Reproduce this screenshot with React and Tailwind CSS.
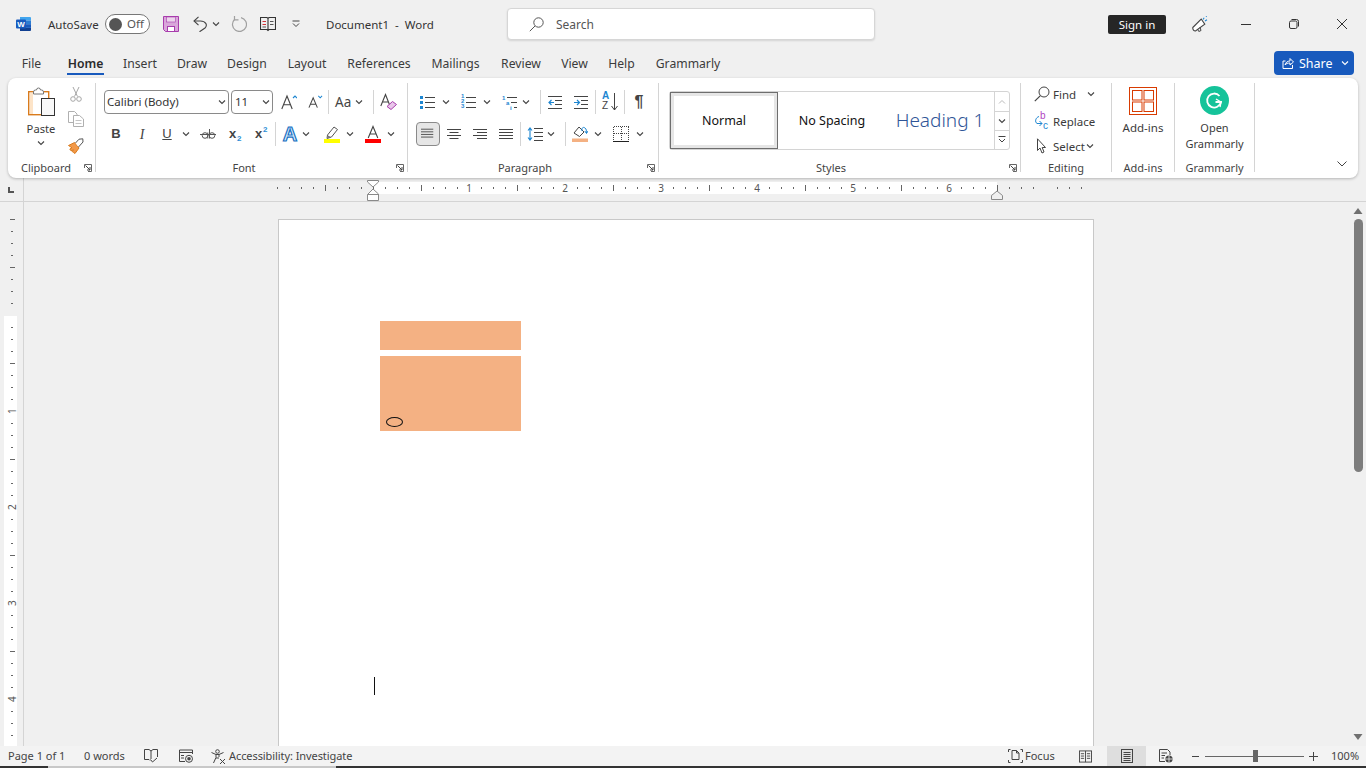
import React from 'react';

// ---- small helpers ----
const Ic = ({ className = 'w-[16px] h-[16px]', box = '0 0 16 16', children }) => (
  <svg viewBox={box} className={`block shrink-0 ${className}`} fill="none">{children}</svg>
);

const Chev = ({ className = '', color = '#444' }) => (
  <Ic className={`w-[8px] h-[8px] ${className}`} box="0 0 8 8">
    <path d="M1 2.5 L4 5.5 L7 2.5" stroke={color} strokeWidth="1.1" />
  </Ic>
);

const Sep = ({ className = '' }) => <div className={`w-px h-[24px] shrink-0 bg-[#d4d4d4] ${className}`} />;
const GroupSep = () => <div className="w-px shrink-0 bg-[#d4d4d4] mt-[5px] mb-[6px]" />;

const Launcher = () => (
  <Ic className="w-[8px] h-[8px] absolute right-[3px] top-[3px]" box="0 0 8 8">
    <path d="M0.5 4 V0.5 H7.5 V7.5 H4" stroke="#666" strokeWidth="1" />
    <path d="M1.5 1.5 L6 6 M3 6 H6 V3" stroke="#444" strokeWidth="1" />
  </Ic>
);

const GroupLabel = ({ children, launcher, className = '' }) => (
  <div className={`relative h-[14px] leading-[14px] text-center text-[11px] text-[#444] whitespace-nowrap ${className}`}>
    {children}
    {launcher && <Launcher />}
  </div>
);

const Lines = ({ rows, className = 'w-[15px] h-[16px]', x1 = 3, x2 = 15 }) => (
  <Ic className={className}>
    {rows.map((y, i) => <path key={i} d={`M${x1} ${y}.5 H${x2}`} stroke="#444" />)}
  </Ic>
);

// ---- title bar icons ----
const WordLogo = () => (
  <Ic className="w-[16px] h-[16px]">
    <path d="M4 1 H14 a1 1 0 0 1 1 1 V4.5 H4 Z" fill="#41a5ee" />
    <rect x="4" y="4.5" width="11" height="3.7" fill="#2b7cd3" />
    <rect x="4" y="8.2" width="11" height="3.7" fill="#185abd" />
    <path d="M4 11.9 H15 V14 a1 1 0 0 1 -1 1 H4 Z" fill="#103f91" />
    <rect x="0" y="3.5" width="10" height="9" rx="1" fill="#185abd" />
    <text x="5" y="11" fontSize="8" fontWeight="700" textAnchor="middle" fill="#fff" fontFamily="Liberation Sans">W</text>
  </Ic>
);

const SaveIcon = () => (
  <Ic>
    <path d="M0.5 0.5 H15.5 V15.5 H2.5 L0.5 13.5 Z" fill="#d9a6da" stroke="#a83cad" />
    <rect x="3.5" y="1" width="9" height="5" fill="#ecd4ec" stroke="#a83cad" strokeWidth="0.6" />
    <rect x="4.5" y="10.5" width="7" height="5" fill="#fff" stroke="#a83cad" />
  </Ic>
);

const UndoIcon = () => (
  <Ic className="w-[14px] h-[16px]" box="0 0 14 16">
    <path d="M1 5 H7.5 C12.5 5 15 9 12 12 L6.5 15.8" stroke="#444" strokeWidth="1.1" />
    <path d="M5.5 0.8 L1 5 L5.5 9.2" stroke="#444" strokeWidth="1.1" />
  </Ic>
);

const RedoIcon = () => (
  <Ic>
    <path d="M3.5 3.5 A7 7 0 1 0 10 1.6" stroke="#a0a0a0" strokeWidth="1.2" />
    <path d="M3.5 0 V3.8 H7.5" stroke="#a0a0a0" strokeWidth="1.2" />
  </Ic>
);

const ReadIcon = () => (
  <Ic>
    <path d="M0.5 1.5 H7 L8 2.5 L9 1.5 H15.5 V13.5 H9 L8 14.5 L7 13.5 H0.5 Z M8 2.5 V14" stroke="#333" strokeWidth="1.1" />
    <path d="M2.5 5.5 H6 M2.5 8.5 H6" stroke="#d13438" />
    <path d="M10 5.5 H13.5 M10 8.5 H13.5 M2.5 11 H6" stroke="#555" />
  </Ic>
);

const SearchIcon = () => (
  <Ic className="w-[15px] h-[15px]" box="0 0 15 15">
    <circle cx="9.5" cy="5.5" r="4.7" stroke="#555" />
    <path d="M6 9 L0.8 14.2" stroke="#555" />
  </Ic>
);

const CoauthIcon = () => (
  <Ic>
    <path d="M0.8 11.5 L9.2 3 L12.8 8.2 L3.5 15 C2 15.2 0.5 13.5 0.8 11.5 Z" stroke="#444" strokeWidth="1.1" fill="#fff" />
    <path d="M5.5 13 L6.8 15.5 L9 14.5 L8 11.2" stroke="#444" />
    <path d="M11 3.5 L12.2 1.8 M13 5 L15 3.8 M14 0.8 L14.6 0.2" stroke="#1d86d1" strokeWidth="1.1" />
  </Ic>
);

const ShareIcon = () => (
  <Ic className="w-[12px] h-[12px]" box="0 0 12 12">
    <path d="M3.5 4 H1 V11.5 H10.5 V8" stroke="#fff" />
    <path d="M3 8 C3.5 5.5 5.5 4 8 4 V1.5 L11.5 5 L8 8 V6 C6 6 4 6.5 3 8 Z" stroke="#fff" />
  </Ic>
);

// ---- clipboard ----
const PasteIcon = () => (
  <Ic className="w-[27px] h-[29px]" box="0 0 27 29">
    <rect x="0.7" y="4.7" width="20" height="23" fill="#fff" stroke="#d97b1c" strokeWidth="1.4" />
    <rect x="2" y="6" width="3" height="21" fill="#fde4c8" />
    <path d="M5.5 5 a2 2 0 0 1 2 -2 h1 a2 2 0 0 1 4 0 h1 a2 2 0 0 1 2 2 v2 h-10 Z" fill="#fff" stroke="#777" />
    <rect x="13.5" y="11.5" width="13" height="17" fill="#f8f8f8" stroke="#333" />
  </Ic>
);

const CutIcon = () => (
  <Ic>
    <path d="M5 1 L9.5 10.5 M11 1 L6.5 10.5" stroke="#a6a6a6" />
    <circle cx="5" cy="13" r="2.3" stroke="#a6a6a6" />
    <circle cx="11" cy="13" r="2.3" stroke="#a6a6a6" />
  </Ic>
);

const CopyIcon = () => (
  <Ic>
    <path d="M5 11.5 H0.5 V0.5 H6.5 L9 3 V4" stroke="#b0b0b0" />
    <path d="M5.5 4.5 H11.5 L15.5 8 V15.5 H5.5 Z" stroke="#b0b0b0" fill="#fff" />
    <path d="M7.5 9.5 H13.5 M7.5 12.5 H13.5" stroke="#c4c4c4" />
  </Ic>
);

const PainterIcon = () => (
  <Ic>
    <path d="M0.5 7.5 L6.5 4.5 L11 10 L7 15.5 C6 14.5 5 14.5 4.2 13.5 L5.5 11.8 L3 12.8 L1.8 11 L4 9.8 Z" fill="#f2994a" stroke="#d97b1c" />
    <path d="M7.5 5 L11 1.2 L14.8 0.8 L15 4 L10.5 9" fill="#fff" stroke="#555" />
  </Ic>
);

// ---- font ----
const GrowIcon = ({ down }) => (
  <Ic className={down ? 'w-[15px] h-[16px]' : 'w-[16px] h-[16px]'}>
    <path d={down ? 'M1 14 L5.5 3.5 L10 14 M2.6 10.5 H8.4' : 'M0.8 15 L6 2 L11.2 15 M2.6 10.8 H9.4'} stroke="#444" strokeWidth="1.1" />
    <path d={down ? 'M11 1.5 L13 3.5 L15 1.5' : 'M12 4 L14 2 L16 4'} stroke="#1d86d1" strokeWidth="1.1" />
  </Ic>
);

const ClearIcon = () => (
  <Ic className="w-[18px] h-[18px]" box="0 0 18 18">
    <path d="M0.8 13 L5.5 1.5 L10 13 M2.5 9 H8.5" stroke="#444" strokeWidth="1.1" />
    <path d="M7 13.5 L12.5 8.5 L16.5 11.5 L11 16.5 Z" fill="#e9c7ea" stroke="#a83cad" />
  </Ic>
);

const Strike = () => (
  <Ic>
    <circle cx="5" cy="9.5" r="2.8" stroke="#555" />
    <path d="M7.8 6.5 V12.5 M9.5 3 V12.5" stroke="#555" />
    <circle cx="12" cy="9.5" r="2.8" stroke="#555" />
    <path d="M0 8.5 H16" stroke="#555" />
  </Ic>
);

const SubSup = ({ sup }) => (
  <span className="relative block w-[16px] h-[16px] font-['Liberation_Sans',sans-serif]">
    <span className="text-[13px] font-bold text-[#444] leading-[16px] absolute left-[1px] top-0">x</span>
    <span className={`text-[8px] font-bold text-[#2e8fd6] leading-[8px] absolute left-[9px] ${sup ? 'top-0' : 'top-[9px]'}`}>2</span>
  </span>
);

const TextEffect = () => (
  <span className="block font-['Liberation_Sans',sans-serif] font-bold text-[20px] leading-[20px] text-[#dff0fb] [-webkit-text-stroke:1.2px_#1a72c4]">A</span>
);

const Highlighter = () => (
  <Ic className="w-[16px] h-[18px]" box="0 0 16 18">
    <path d="M3.5 10 L10 2 L13.5 4.5 L7.5 12 L3 13.5 Z" stroke="#555" fill="#fff" />
    <path d="M4 10.5 L7 12 L3 13.5 Z" fill="#777" />
    <rect x="0" y="14" width="16" height="4" fill="#ffff00" />
  </Ic>
);

const FontColor = () => (
  <Ic className="w-[16px] h-[18px]" box="0 0 16 18">
    <path d="M3.2 13 L8 1.5 L12.8 13 M4.8 9 H11.2" stroke="#444" strokeWidth="1.1" />
    <rect x="0" y="14" width="16" height="4" fill="#ff0000" />
  </Ic>
);

// ---- paragraph ----
const Bullets = () => (
  <Ic className="w-[15px] h-[14px]" box="0 0 15 14">
    {[1, 6, 11].map(y => <rect key={y} x="0" y={y} width="3" height="3" fill="#1d86d1" />)}
    {[2, 7, 12].map(y => <path key={y} d={`M5 ${y}.5 H15`} stroke="#444" />)}
  </Ic>
);

const Numbers = () => (
  <span className="relative block w-[15px] h-[14px]">
    <span className="absolute left-0 top-[-1px] text-[6px] leading-[5px] font-bold text-[#1d86d1] text-center font-['Liberation_Sans',sans-serif]">1<br />2<br />3</span>
    <Ic className="w-[15px] h-[14px]" box="0 0 15 14">
      {[2, 7, 12].map(y => <path key={y} d={`M5 ${y}.5 H15`} stroke="#444" />)}
    </Ic>
  </span>
);

const Multi = () => (
  <span className="relative block w-[15px] h-[14px]">
    <span className="absolute left-0 top-0 text-[6px] leading-[6px] font-bold text-[#1d86d1] font-['Liberation_Sans',sans-serif]">1</span>
    <span className="absolute left-[4px] top-[5px] text-[6px] leading-[6px] font-bold text-[#1d86d1] font-['Liberation_Sans',sans-serif]">a</span>
    <span className="absolute left-[8px] top-[10px] text-[6px] leading-[6px] font-bold text-[#1d86d1] font-['Liberation_Sans',sans-serif]">i</span>
    <Ic className="w-[15px] h-[14px]" box="0 0 15 14">
      <path d="M5 2.5 H15 M9 7.5 H15 M12 12.5 H15" stroke="#444" />
    </Ic>
  </span>
);

const Indent = ({ inc }) => (
  <Ic className="w-[14px] h-[14px]" box="0 0 14 14">
    <path d="M0 1.5 H14 M7 5.5 H14 M7 9.5 H14 M0 13.5 H14" stroke="#444" />
    <path d={inc ? 'M0 7.5 H5 M3 5 L5.5 7.5 L3 10' : 'M6 7.5 H1 M3.5 5 L1 7.5 L3.5 10'} stroke="#1d86d1" strokeWidth="1.2" />
  </Ic>
);

const SortIcon = () => (
  <span className="relative block w-[16px] h-[18px] font-['Liberation_Sans',sans-serif]">
    <span className="absolute left-0 top-[-2px] text-[10px] leading-[10px] font-bold text-[#1d86d1]">A</span>
    <span className="absolute left-0 top-[8px] text-[10px] leading-[10px] text-[#444]">Z</span>
    <Ic className="w-[7px] h-[18px] absolute right-0 top-0" box="0 0 7 18">
      <path d="M3.5 0 V17 M0.5 13 L3.5 17 L6.5 13" stroke="#444" />
    </Ic>
  </span>
);

const Pilcrow = () => (
  <span className="block font-['Liberation_Sans',sans-serif] font-bold text-[16px] leading-[16px] text-[#444]">¶</span>
);

const LineSpacing = () => (
  <Ic className="w-[16px] h-[14px]" box="0 0 16 14">
    <path d="M3 1 V13 M1 3.5 L3 1 L5 3.5 M1 10.5 L3 13 L5 10.5" stroke="#1d86d1" strokeWidth="1.1" />
    <path d="M7 1.5 H16 M7 5.5 H16 M7 9.5 H16 M7 13.5 H16" stroke="#444" />
  </Ic>
);

const Shading = () => (
  <Ic className="w-[16px] h-[18px]" box="0 0 16 18">
    <path d="M2 8 L7 2 L12 7 L7.5 11.5 Z" stroke="#444" fill="#fff" />
    <path d="M10 6 C9.5 3 11 1.5 13 3 C14.5 4 14.5 6 14.5 8 M12.8 6 L14.5 8.5 L16 6" stroke="#1d86d1" />
    <rect x="0" y="13.5" width="16" height="3.5" fill="#f4b183" />
  </Ic>
);

const Borders = () => (
  <svg viewBox="0 0 16 16" className="block shrink-0 w-[16px] h-[16px]" fill="none" shapeRendering="crispEdges">
    <path d="M0.5 0.5 H15.5 M0.5 0.5 V14 M15.5 0.5 V14 M0.5 7.5 H15.5 M8 0.5 V14" stroke="#444" strokeDasharray="1 1" />
    <path d="M0 15 H16" stroke="#222" strokeWidth="1" />
  </svg>
);

// ---- editing etc ----
const FindIcon = () => (
  <Ic>
    <circle cx="10" cy="6" r="5" stroke="#444" />
    <path d="M6.4 9.6 L0.8 15.2" stroke="#444" strokeWidth="1.2" />
  </Ic>
);

const ReplaceIcon = () => (
  <span className="relative block w-[16px] h-[16px] font-['Liberation_Sans',sans-serif]">
    <span className="absolute left-[6px] top-[-2px] text-[10px] leading-[10px] text-[#b146c2]">b</span>
    <span className="absolute left-[9px] top-[8px] text-[10px] leading-[10px] text-[#1d86d1]">c</span>
    <Ic className="w-[16px] h-[16px]">
      <path d="M5 3.5 C1.5 4.5 0.5 9 3 10.5 H8 M5.5 8 L8 10.5 L5.5 13" stroke="#1d86d1" />
    </Ic>
  </span>
);

const SelectIcon = () => (
  <Ic>
    <path d="M3.5 0.8 V12.5 L6 10 L8 15 L10 14 L8.2 9.5 H11.5 Z" stroke="#444" fill="#fff" />
  </Ic>
);

const AddinsIcon = () => (
  <Ic className="w-[28px] h-[28px]" box="0 0 28 28">
    <rect x="0.5" y="0.5" width="27" height="27" stroke="#d83b01" />
    <rect x="3.5" y="3.5" width="9.5" height="9.5" stroke="#d83b01" />
    <rect x="15" y="3.5" width="9.5" height="9.5" stroke="#d83b01" />
    <rect x="3.5" y="15" width="9.5" height="9.5" stroke="#d83b01" />
    <rect x="15" y="15" width="9.5" height="9.5" stroke="#d83b01" />
  </Ic>
);

const GrammarlyIcon = () => (
  <Ic className="w-[29px] h-[29px]" box="0 0 29 29">
    <circle cx="14.5" cy="14.5" r="14.5" fill="#15c39a" />
    <path d="M19.5 10 A7 7 0 1 0 21 16 H15.5" stroke="#fff" strokeWidth="1.8" />
    <path d="M16 13 L21 16 L20 21" stroke="#fff" strokeWidth="1.4" />
  </Ic>
);

// ---- status bar icons ----
const BookCheck = () => (
  <Ic className="w-[14px] h-[14px]" box="0 0 14 14">
    <path d="M6 11.5 L5 10.5 H0.5 V0.5 H5 L7 2 L9 0.5 H13.5 V8 M7 2 V10" stroke="#444" />
    <path d="M6.5 10.5 L8.5 13 L13 9" stroke="#444" />
  </Ic>
);

const MacroIcon = () => (
  <Ic className="w-[14px] h-[14px]" box="0 0 14 14">
    <path d="M0.5 6 V1 H13.5 V5 M0.5 3.5 H13.5 M0.5 6 V12.5 H6" stroke="#444" />
    <path d="M2 6.5 H5 M2 9 H5" stroke="#444" />
    <circle cx="10" cy="9.8" r="3.5" stroke="#444" />
    <circle cx="10" cy="9.8" r="1.8" fill="#444" />
  </Ic>
);

const AccessIcon = () => (
  <Ic className="w-[15px] h-[15px]" box="0 0 15 15">
    <circle cx="6.5" cy="2.5" r="1.8" stroke="#444" />
    <path d="M0.5 3.5 L5 5.5 H8 L12.5 3.5 M5 5.5 V8.5 L2.5 14 M8 5.5 V8" stroke="#444" />
    <path d="M9 10 L14 15 M14 10 L9 15 M5 9 H8" stroke="#444" />
  </Ic>
);

const FocusIcon = () => (
  <Ic className="w-[15px] h-[14px]" box="0 0 15 14">
    <path d="M2.5 0.5 H0.5 V3 M12.5 0.5 H14.5 V3 M0.5 11 V13.5 H2.5 M14.5 11 V13.5 H12.5" stroke="#444" />
    <path d="M4 1.5 H8.5 L11 4 V10.5 H4 Z M8.5 1.5 V4 H11" stroke="#444" />
  </Ic>
);

const PrintIcon = () => (
  <Ic className="w-[12px] h-[14px]" box="0 0 12 14">
    <rect x="0.5" y="0.5" width="11" height="13" stroke="#444" />
    <path d="M2.5 3.5 H9.5 M2.5 5.5 H9.5 M2.5 7.5 H9.5 M2.5 9.5 H9.5 M2.5 11.5 H9.5" stroke="#444" />
  </Ic>
);

const StatusRead = () => (
  <Ic className="w-[13px] h-[13px]" box="0 0 14 13">
    <rect x="0.5" y="0.5" width="13" height="12" stroke="#444" />
    <path d="M7 0.5 V12.5 M2 3.5 H5.5 M2 6 H5.5 M2 8.5 H5.5 M8.5 3.5 H12 M8.5 6 H12 M8.5 8.5 H12" stroke="#444" />
  </Ic>
);

const WebIcon = () => (
  <Ic className="w-[14px] h-[14px]" box="0 0 14 14">
    <path d="M6 12.5 H0.5 V0.5 H8.5 L11 3 V6" stroke="#444" />
    <path d="M2.5 4 H8 M2.5 6.5 H6 M2.5 9 H5" stroke="#444" />
    <circle cx="10" cy="10" r="3.6" fill="#444" />
    <path d="M6.5 10 H13.5 M10 6.5 V13.5" stroke="#f3f3f3" strokeWidth="0.8" />
  </Ic>
);

// ---- rulers ----
const range = (from, to, step) => {
  const out = [];
  for (let v = from; v <= to; v += step) out.push(v);
  return out;
};

function TopRuler() {
  const nums = [1, 2, 3, 4, 5, 6];
  return (
    <svg viewBox="24 178 1342 23" className="block w-[1342px] h-[23px]">
      <rect x="373" y="182" width="624" height="12" fill="#fff" />
      {range(277, 1081, 12).map(x => {
        const off = (x - 373 + 960) % 96;
        if (off === 0 && x > 373) return null;
        const tall = off === 48;
        return <rect key={x} x={x} y={tall ? 185 : 187} width="1" height={tall ? 6 : 2} fill="#666" />;
      })}
      {nums.map(n => (
        <text key={n} x={373 + n * 96} y="192" fontSize="10" textAnchor="middle" fill="#555" fontFamily="Noto Sans">{n}</text>
      ))}
      <path d="M367.5 180.5 H378.5 V182 L373 187 L367.5 182 Z M367.5 194.5 L373 189 L378.5 194 V200.5 H367.5 Z M367.5 194.5 H378.5" fill="#fff" stroke="#8a8a8a" />
      <path d="M991.5 199.5 V195.5 L997 191 L1002.5 195.5 V199.5 Z" fill="#f0f0f0" stroke="#8a8a8a" />
    </svg>
  );
}

function SideRuler() {
  return (
    <svg viewBox="0 202 23 544" className="block w-[23px] h-[544px]">
      <rect x="4" y="316" width="13" height="430" fill="#fff" />
      {range(219, 740, 12).map(y => {
        const off = (y - 219) % 96;
        if (off === 0 && y > 219 + 96) return null;
        const tall = off === 0 || off === 48;
        if (y === 315) return null;
        return <rect key={y} x={tall ? 10 : 11} y={y} width={tall ? 5 : 2} height="1" fill="#666" />;
      })}
      {[1, 2, 3, 4].map(n => (
        <text key={n} x="12" y={411 + (n - 1) * 96} fontSize="10" textAnchor="middle" fill="#555" fontFamily="Noto Sans" transform={`rotate(-90 12 ${411 + (n - 1) * 96})`} dy="3.5">{n}</text>
      ))}
    </svg>
  );
}

const tabs = [
  ['File', 'w-[19px] ml-[22px]'],
  ['Home', 'w-[37px] ml-[26px]'],
  ['Insert', 'w-[32px] ml-[20px]'],
  ['Draw', 'w-[30px] ml-[21px]'],
  ['Design', 'w-[40px] ml-[20px]'],
  ['Layout', 'w-[38px] ml-[21px]'],
  ['References', 'w-[64px] ml-[21px]'],
  ['Mailings', 'w-[49px] ml-[20px]'],
  ['Review', 'w-[40px] ml-[21px]'],
  ['View', 'w-[27px] ml-[20px]'],
  ['Help', 'w-[27px] ml-[20px]'],
  ['Grammarly', 'w-[64px] ml-[21px]'],
];

export default function App() {
  return (
    <div className="w-[1366px] h-[768px] overflow-hidden flex flex-col bg-[#f0f0f0] text-[#3b3b3b] font-['Noto_Sans',sans-serif] text-[11.5px]">

      {/* Title bar */}
      <div className="h-[48px] shrink-0 flex items-center pl-[16px]">
        <WordLogo />
        <span className="ml-[16px] mt-[2px] w-[50px] whitespace-nowrap text-[#333]">AutoSave</span>
        <div className="ml-[7px] w-[45px] h-[20px] rounded-full border border-[#777] bg-white flex items-center pl-[3px] shrink-0">
          <div className="w-[13px] h-[13px] rounded-full bg-[#555]" />
          <span className="ml-[5px] text-[11.5px] text-[#555]">Off</span>
        </div>
        <div className="ml-[13px]"><SaveIcon /></div>
        <div className="ml-[14px]"><UndoIcon /></div>
        <Chev className="ml-[5px]" />
        <div className="ml-[11px]"><RedoIcon /></div>
        <div className="ml-[13px]"><ReadIcon /></div>
        <Ic className="ml-[16px] w-[8px] h-[8px]" box="0 0 8 8">
          <path d="M0.5 1 H7.5 M1 3.5 L4 6.5 L7 3.5" stroke="#444" />
        </Ic>
        <span className="ml-[26px] mt-[2px] w-[108px] whitespace-pre text-[#333]">Document1  -  Word</span>
        <div className="ml-[73px] w-[368px] h-[32px] rounded-[4px] bg-white border border-[#d6d6d6] shadow-[0_1px_2px_rgba(0,0,0,0.12)] flex items-center pl-[21px] shrink-0">
          <SearchIcon />
          <span className="ml-[12px] mt-[2px] text-[12px] text-[#555]">Search</span>
        </div>
        <div className="ml-auto w-[58px] h-[19px] pt-[1px] bg-[#262626] rounded-[2px] text-white flex items-center justify-center shrink-0">Sign in</div>
        <div className="ml-[26px]"><CoauthIcon /></div>
        <Ic className="ml-[33px] w-[10px] h-[10px]" box="0 0 10 10"><path d="M0 5.5 H10" stroke="#333" /></Ic>
        <Ic className="ml-[38px] w-[10px] h-[10px]" box="0 0 10 10">
          <rect x="0.5" y="2" width="7.5" height="7.5" rx="1.5" stroke="#333" />
          <path d="M2.5 0.5 H7.5 a2 2 0 0 1 2 2 V7.5" stroke="#333" />
        </Ic>
        <Ic className="ml-[38px] mr-[19px] w-[10px] h-[10px]" box="0 0 10 10"><path d="M0 0 L10 10 M10 0 L0 10" stroke="#333" /></Ic>
      </div>

      {/* Tabs */}
      <div className="h-[30px] shrink-0 flex items-center text-[12.2px]">
        {tabs.map(([name, cls]) => (
          <div key={name} className={`relative h-[30px] pt-[2px] flex items-center justify-center whitespace-nowrap shrink-0 ${cls} ${name === 'Home' ? 'font-semibold text-[#2b2b2b]' : 'text-[#3b3b3b]'}`}>
            {name}
            {name === 'Home' && <div className="absolute left-0 right-0 top-[25px] h-[2px] bg-[#185abd]" />}
          </div>
        ))}
        <div className="ml-auto mr-[12px] self-start mt-[3px] w-[80px] h-[24px] rounded-[4px] bg-[#185abd] text-white flex items-center pl-[8px] text-[12.5px]">
          <ShareIcon />
          <span className="ml-[5px] mt-[2px]">Share</span>
          <Chev className="ml-auto mr-[5px]" color="#fff" />
        </div>
      </div>

      {/* Ribbon */}
      <div className="relative z-10 mx-[8px] h-[100px] shrink-0 flex bg-white rounded-[8px] shadow-[0_1px_3px_rgba(0,0,0,0.25)]">

        {/* Clipboard */}
        <div className="w-[87px] shrink-0 flex flex-col">
          <div className="h-[83px] flex">
            <div className="ml-[6px] w-[54px] flex flex-col items-center pt-[9px]">
              <PasteIcon />
              <span className="mt-[5px] leading-[16px] text-[11.2px]">Paste</span>
              <Chev className="mt-[2px]" />
            </div>
            <div className="w-[16px] flex flex-col pt-[8px]">
              <CutIcon />
              <div className="mt-[9px]"><CopyIcon /></div>
              <div className="mt-[11px]"><PainterIcon /></div>
            </div>
          </div>
          <GroupLabel launcher className="pr-[11px]">Clipboard</GroupLabel>
        </div>
        <GroupSep />

        {/* Font */}
        <div className="w-[311px] shrink-0 flex flex-col">
          <div className="h-[83px] pt-[12px]">
            <div className="h-[24px] flex items-center">
              <div className="ml-[8px] w-[125px] h-[24px] rounded-[4px] border border-[#8a8a8a] flex items-center pl-[2px] pr-[2px] shrink-0">
                <span className="text-[#333]">Calibri (Body)</span>
                <Chev className="ml-auto" />
              </div>
              <div className="ml-[2px] w-[42px] h-[24px] rounded-[4px] border border-[#8a8a8a] flex items-center pl-[3px] pr-[2px] shrink-0">
                <span className="text-[#333]">11</span>
                <Chev className="ml-auto" />
              </div>
              <div className="ml-[8px]"><GrowIcon /></div>
              <div className="ml-[11px]"><GrowIcon down /></div>
              <Sep className="ml-[5px]" />
              <span className="ml-[6px] w-[18px] text-[13.5px] whitespace-nowrap text-[#444]">Aa</span>
              <Chev className="ml-[2px]" />
              <Sep className="ml-[10px]" />
              <div className="ml-[6px]"><ClearIcon /></div>
            </div>
            <div className="mt-[8px] h-[24px] flex items-center pl-[7px]">
              <div className="w-[26px] flex justify-center font-['Liberation_Sans',sans-serif] font-bold text-[13px] text-[#444]">B</div>
              <div className="w-[26px] flex justify-center font-['Liberation_Serif',serif] italic text-[14px] text-[#444]">I</div>
              <div className="w-[24px] flex justify-center font-['Liberation_Sans',sans-serif] text-[13px] text-[#444] underline">U</div>
              <div className="w-[14px] flex justify-center"><Chev /></div>
              <div className="w-[30px] flex justify-center"><Strike /></div>
              <div className="w-[26px] flex justify-center"><SubSup /></div>
              <div className="w-[26px] flex justify-center"><SubSup sup /></div>
              <Sep />
              <div className="ml-[2px] w-[24px] flex justify-center"><TextEffect /></div>
              <Chev />
              <div className="ml-[10px] w-[24px] flex justify-center"><Highlighter /></div>
              <Chev className="ml-[2px]" />
              <div className="ml-[7px] w-[24px] flex justify-center"><FontColor /></div>
              <Chev className="ml-[2px]" />
            </div>
          </div>
          <GroupLabel launcher className="pr-[15px]">Font</GroupLabel>
        </div>
        <GroupSep />

        {/* Paragraph */}
        <div className="w-[250px] shrink-0 flex flex-col">
          <div className="h-[83px] pt-[12px]">
            <div className="h-[24px] flex items-center">
              <div className="ml-[12px]"><Bullets /></div>
              <Chev className="ml-[7px]" />
              <div className="ml-[11px]"><Numbers /></div>
              <Chev className="ml-[7px]" />
              <div className="ml-[11px]"><Multi /></div>
              <Chev className="ml-[5px]" />
              <Sep className="ml-[10px]" />
              <div className="ml-[7px]"><Indent /></div>
              <div className="ml-[12px]"><Indent inc /></div>
              <Sep className="ml-[7px]" />
              <div className="ml-[6px]"><SortIcon /></div>
              <Sep className="ml-[6px]" />
              <div className="ml-[7px] w-[14px] flex justify-center"><Pilcrow /></div>
            </div>
            <div className="mt-[8px] h-[24px] flex items-center">
              <div className="ml-[8px] w-[24px] h-[24px] rounded-[4px] border border-[#8a8a8a] bg-[#e6e6e6] flex items-center justify-center shrink-0">
                <Lines rows={[2, 5, 8, 11]} className="w-[14px] h-[14px]" x1={0} x2={14} />
              </div>
              <div className="ml-[2px] w-[24px] flex justify-center"><Ic className="w-[14px] h-[14px]" box="0 0 14 14"><path d="M0 2.5 H14 M2.5 5.5 H11.5 M0 8.5 H14 M2.5 11.5 H11.5" stroke="#444" /></Ic></div>
              <div className="ml-[2px] w-[24px] flex justify-center"><Ic className="w-[14px] h-[14px]" box="0 0 14 14"><path d="M0 2.5 H14 M4 5.5 H14 M0 8.5 H14 M4 11.5 H14" stroke="#444" /></Ic></div>
              <div className="ml-[2px] w-[24px] flex justify-center"><Ic className="w-[14px] h-[14px]" box="0 0 14 14"><path d="M0 2.5 H14 M0 5.5 H14 M0 8.5 H14 M0 11.5 H14" stroke="#444" /></Ic></div>
              <Sep className="ml-[2px]" />
              <div className="ml-[6px]"><LineSpacing /></div>
              <Chev className="ml-[4px]" />
              <Sep className="ml-[10px]" />
              <div className="ml-[6px]"><Shading /></div>
              <Chev className="ml-[6px]" />
              <div className="ml-[11px]"><Borders /></div>
              <Chev className="ml-[7px]" />
            </div>
          </div>
          <GroupLabel launcher className="pr-[16px]">Paragraph</GroupLabel>
        </div>
        <GroupSep />

        {/* Styles */}
        <div className="w-[361px] shrink-0 flex flex-col">
          <div className="h-[83px] pt-[13px] pl-[10px]">
            <div className="w-[341px] h-[59px] rounded-[3px] border border-[#d4d4d4] flex">
              <div className="w-[108px] h-[57px] pt-[2px] border border-[#6e6e6e] bg-white flex items-center justify-center shadow-[inset_0_0_0_3px_#e6e6e6] text-[#111] text-[12.5px]">Normal</div>
              <div className="w-[108px] pt-[2px] flex items-center justify-center text-[#111] text-[12.5px]">No Spacing</div>
              <div className="w-[108px] flex items-center justify-center text-[#2f5597] text-[19px] font-light whitespace-nowrap">Heading 1</div>
              <div className="ml-auto w-[15px] flex flex-col border-l border-[#d4d4d4]">
                <div className="h-[20px] flex items-center justify-center border-b border-[#d4d4d4]"><Ic className="w-[8px] h-[8px]" box="0 0 8 8"><path d="M1 5.5 L4 2.5 L7 5.5" stroke="#bbb" /></Ic></div>
                <div className="h-[19px] flex items-center justify-center border-b border-[#d4d4d4]"><Chev /></div>
                <div className="h-[18px] flex items-center justify-center"><Ic className="w-[8px] h-[8px]" box="0 0 8 8"><path d="M0.5 0.5 H7.5 M1 3 L4 6 L7 3" stroke="#444" /></Ic></div>
              </div>
            </div>
          </div>
          <GroupLabel launcher className="pr-[17px]">Styles</GroupLabel>
        </div>
        <GroupSep />

        {/* Editing */}
        <div className="w-[90px] shrink-0 flex flex-col">
          <div className="h-[83px] pt-[3px] pl-[13px]">
            <div className="h-[26px] flex items-center">
              <FindIcon />
              <span className="ml-[3px] mt-[2px] w-[34px]">Find</span>
              <Chev />
            </div>
            <div className="mt-[1px] h-[26px] flex items-center">
              <ReplaceIcon />
              <span className="ml-[3px] mt-[2px]">Replace</span>
            </div>
            <div className="h-[24px] flex items-center">
              <SelectIcon />
              <span className="ml-[3px] mt-[2px] w-[33px]">Select</span>
              <Chev />
            </div>
          </div>
          <GroupLabel>Editing</GroupLabel>
        </div>
        <GroupSep />

        {/* Add-ins */}
        <div className="w-[62px] shrink-0 flex flex-col">
          <div className="h-[83px] flex flex-col items-center pt-[9px]">
            <AddinsIcon />
            <span className="mt-[5px] leading-[16px] whitespace-nowrap">Add-ins</span>
          </div>
          <GroupLabel>Add-ins</GroupLabel>
        </div>
        <GroupSep />

        {/* Grammarly */}
        <div className="w-[79px] shrink-0 flex flex-col">
          <div className="h-[83px] flex flex-col items-center pt-[8px]">
            <GrammarlyIcon />
            <span className="mt-[5px] leading-[16px] text-center text-[11px]">Open<br />Grammarly</span>
          </div>
          <GroupLabel className="text-[10.5px]">Grammarly</GroupLabel>
        </div>
        <GroupSep />

        <div className="flex-1 flex items-end justify-end pr-[11px] pb-[10px]">
          <Ic className="w-[10px] h-[8px]" box="0 0 10 8"><path d="M0.5 1.5 L5 6 L9.5 1.5" stroke="#444" /></Ic>
        </div>
      </div>

      {/* Ruler row */}
      <div className="h-[24px] shrink-0 flex border-b border-[#d4d4d4]">
        <div className="w-[24px] shrink-0 border-r border-[#d4d4d4] pl-[8px] pt-[9px]">
          <Ic className="w-[6px] h-[6px]" box="0 0 6 6"><path d="M1 0 V5 H6" stroke="#555" strokeWidth="2" /></Ic>
        </div>
        <TopRuler />
      </div>

      {/* Document area */}
      <div className="h-[544px] shrink-0 flex overflow-hidden">
        <div className="w-[24px] shrink-0 border-r border-[#d4d4d4]"><SideRuler /></div>
        <div className="flex-1 pl-[254px] pt-[17px] overflow-hidden">
          <div className="relative w-[816px] h-[1056px] bg-white border border-[#c8c8c8] pl-[95px] pt-[101px]">
            <div className="ml-[6px] w-[141px] h-[29px] bg-[#f4b183]" />
            <div className="relative ml-[6px] mt-[6px] w-[141px] h-[75px] bg-[#f4b183]">
              <div className="absolute left-[6px] top-[61px] w-[17px] h-[10px] rounded-[50%] border border-[#111]" />
            </div>
            <div className="mt-[246px] w-px h-[18px] bg-[#111]" />
          </div>
        </div>
        <div className="w-[16px] shrink-0 flex flex-col items-center">
          <Ic className="mt-[5px] w-[10px] h-[8px]" box="0 0 10 8"><path d="M5 1 L9.5 7 H0.5 Z" fill="#707070" /></Ic>
          <div className="mt-[4px] w-[9px] h-[253px] rounded-full bg-[#7d7d7d]" />
          <Ic className="mt-auto mb-[5px] w-[10px] h-[8px]" box="0 0 10 8"><path d="M5 7 L9.5 1 H0.5 Z" fill="#707070" /></Ic>
        </div>
      </div>

      {/* Status bar */}
      <div className="h-[20px] shrink-0 flex items-center bg-[#f3f3f3] text-[11px] text-[#444] pl-[8px] whitespace-nowrap">
        <span className="w-[57px]">Page 1 of 1</span>
        <span className="ml-[19px] w-[41px]">0 words</span>
        <div className="ml-[19px]"><BookCheck /></div>
        <div className="ml-[21px]"><MacroIcon /></div>
        <div className="ml-[18px]"><AccessIcon /></div>
        <span className="ml-[3px] w-[123px] tracking-[-0.08px]">Accessibility: Investigate</span>

        <div className="ml-auto"><FocusIcon /></div>
        <span className="ml-[2px] w-[29px]">Focus</span>
        <div className="ml-[25px]"><StatusRead /></div>
        <div className="ml-[15px] w-[39px] h-[20px] bg-[#dedede] flex items-center justify-center"><PrintIcon /></div>
        <div className="ml-[13px]"><WebIcon /></div>
        <Ic className="ml-[19px] w-[7px] h-[7px]" box="0 0 7 7"><path d="M0 3.5 H7" stroke="#444" /></Ic>
        <div className="ml-[6px] relative w-[99px] h-px bg-[#666]">
          <div className="absolute left-[48px] top-[-6px] w-[5px] h-[12px] bg-[#666]" />
        </div>
        <Ic className="ml-[5px] w-[9px] h-[9px]" box="0 0 9 9"><path d="M0 4.5 H9 M4.5 0 V9" stroke="#444" /></Ic>
        <span className="ml-[13px] w-[27px] mr-[8px]">100%</span>
      </div>

      <div className="h-[2px] shrink-0 flex">
        <div className="w-[48px] bg-[#333]" />
        <div className="w-[288px] bg-[#c8c8c8]" />
        <div className="flex-1 bg-[#333]" />
      </div>
    </div>
  );
}
